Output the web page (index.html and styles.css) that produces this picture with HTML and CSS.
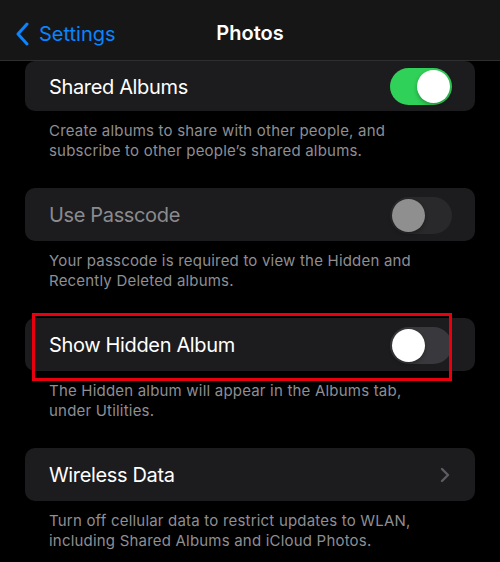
FILE: index.html
```html
<!DOCTYPE html>
<html lang="en">
<head>
  <meta charset="UTF-8" />
  <title>Photos</title>
  <link rel="stylesheet" href="styles.css">
</head>
<body>
<div class="screen">
  <div class="nav-bar">
    <div class="back-link">
      <svg class="back-icon" width="14" height="24" viewBox="0 0 14 24">
        <path d="M12 2 L3 12 L12 22" fill="none" stroke="#0a84ff" stroke-width="3" stroke-linecap="round" stroke-linejoin="round" />
      </svg>
      <span>Settings</span>
    </div>
    <div class="nav-title">Photos</div>
  </div>

  <div class="list">
    <div class="card card-first">
      <div class="row-label">Shared Albums</div>
      <div class="switch on"><div class="knob"></div></div>
    </div>
    <div class="note">Create albums to share with other people, and subscribe to other people’s shared albums.</div>

    <div class="card">
      <div class="row-label muted">Use Passcode</div>
      <div class="switch disabled"><div class="knob"></div></div>
    </div>
    <div class="note">Your passcode is required to view the Hidden and Recently Deleted albums.</div>

    <div class="card highlighted">
      <div class="row-label">Show Hidden Album</div>
      <div class="switch"><div class="knob"></div></div>
      <div class="mark-box"></div>
    </div>
    <div class="note">The Hidden album will appear in the Albums tab, under Utilities.</div>

    <div class="card">
      <div class="row-label">Wireless Data</div>
      <svg class="chevron" width="10" height="16" viewBox="0 0 10 16">
        <path d="M2 2 L8 8 L2 14" fill="none" stroke="#5c5c61" stroke-width="2.4" stroke-linecap="round" stroke-linejoin="round" />
      </svg>
    </div>
    <div class="note">Turn off cellular data to restrict updates to WLAN, including Shared Albums and iCloud Photos.</div>
  </div>
</div>
</body>
</html>
```

FILE: styles.css
```css
* { box-sizing: border-box; margin: 0; padding: 0; }
body {
  font-family: Inter, 'Liberation Sans', sans-serif;
  background: #000;
  color: #fff;
}
.screen {
  width: 500px;
  height: 562px;
  overflow: hidden;
}
.nav-bar {
  height: 61px;
  background: #161616;
  border-bottom: 1px solid #2e2e2e;
  display: flex;
  align-items: center;
  justify-content: center;
  position: relative;
}
.back-link {
  position: absolute;
  left: 15px;
  top: 22px;
  display: flex;
  align-items: center;
  gap: 10px;
  color: #0a84ff;
  font-size: 20px;
}
.nav-title {
  font-size: 20px;
  font-weight: 600;
  margin-top: 6px;
}
.list {
  padding: 0 25px;
}
.card {
  height: 53px;
  background: #1c1c1e;
  border-radius: 10px;
  display: flex;
  align-items: center;
  justify-content: space-between;
  padding: 1px 23px 0 24px;
  position: relative;
}
.card-first {
  height: 50px;
}
.row-label {
  font-size: 20px;
  letter-spacing: -0.35px;
}
.row-label.muted {
  color: #8b8b8f;
}
.note {
  padding: 10px 55px 27px 24px;
  font-size: 15px;
  line-height: 20px;
  letter-spacing: 0.2px;
  color: #8e8e93;
}
.switch {
  width: 62px;
  height: 37px;
  border-radius: 19px;
  background: #39393d;
  position: relative;
}
.switch .knob {
  position: absolute;
  top: 2px;
  left: 2px;
  width: 33px;
  height: 33px;
  border-radius: 50%;
  background: #fff;
  box-shadow: 0 2px 4px rgba(0, 0, 0, 0.3);
}
.switch.on {
  background: #30d158;
}
.switch.on .knob {
  left: 27px;
}
.switch.disabled {
  background: #29292b;
}
.switch.disabled .knob {
  background: #8f8f8f;
}
.chevron {
  margin-right: 2px;
}
.mark-box {
  position: absolute;
  left: 7px;
  top: -5px;
  width: 420px;
  height: 68px;
  border: 3px solid #e8000e;
}
```
